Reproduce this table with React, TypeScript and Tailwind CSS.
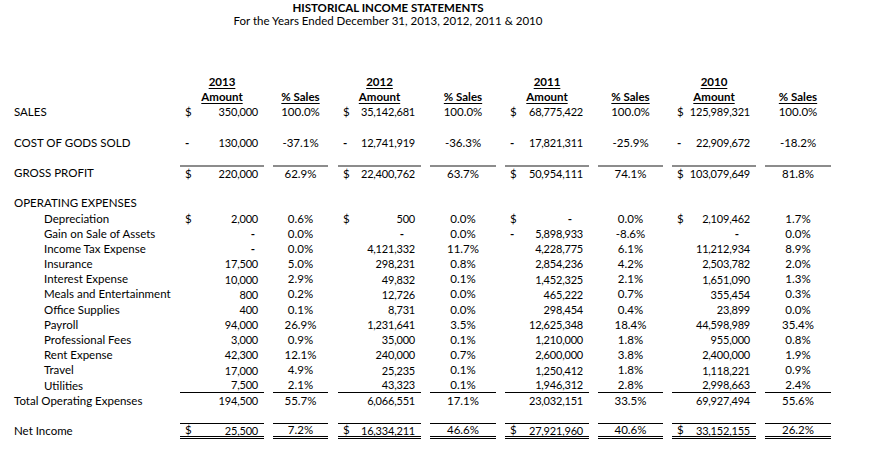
import React from 'react'

type Cell = { s?: string; a: string; p: string }
type Line = 'none' | 'gray' | 'under' | 'net'

const cols =
  'grid grid-cols-[180px_84px_9px_55px_10px_83px_9px_66px_9px_84px_9px_65px_9px_84px_9px_66px] h-[15.2px] items-stretch'

function lineClass(line: Line) {
  if (line === 'gray') return 'border-t-2 border-[#8c8c8c]'
  if (line === 'under') return 'border-b border-black'
  if (line === 'net') return 'border-t border-b-[3px] border-double border-black'
  return ''
}

function Row({
  label,
  indent,
  cells,
  line = 'none',
}: {
  label?: string
  indent?: boolean
  cells?: Cell[]
  line?: Line
}) {
  const lc = lineClass(line)
  return (
    <div className={cols}>
      <div className={`flex items-center whitespace-nowrap ${indent ? 'pl-[44px]' : 'pl-[14px]'}`}>{label}</div>
      {cells
        ? cells.map((c, i) => (
            <React.Fragment key={i}>
              <div className={`flex items-center justify-between pl-[5px] pr-[6px] ${lc}`}>
                <span className={c.s === '-' ? 'font-bold' : ''}>{c.s ?? ''}</span>
                {c.a === '-' ? (
                  <span className={`font-bold ${i === 0 ? 'mr-[3px]' : 'mr-[11px]'}`}>-</span>
                ) : (
                  <span className="text-[11px] tracking-[-0.2px]">{c.a}</span>
                )}
              </div>
              <div />
              <div className={`flex items-center justify-center ${lc}`}>{c.p}</div>
              {i < 3 && <div />}
            </React.Fragment>
          ))
        : null}
    </div>
  )
}

const years = ['2013', '2012', '2011', '2010']

const opex: [string, Cell[]][] = [
  ['Depreciation', [{ s: '$', a: '2,000', p: '0.6%' }, { s: '$', a: '500', p: '0.0%' }, { s: '$', a: '-', p: '0.0%' }, { s: '$', a: '2,109,462', p: '1.7%' }]],
  ['Gain on Sale of Assets', [{ a: '-', p: '0.0%' }, { a: '-', p: '0.0%' }, { s: '-', a: '5,898,933', p: '-8.6%' }, { a: '-', p: '0.0%' }]],
  ['Income Tax Expense', [{ a: '-', p: '0.0%' }, { a: '4,121,332', p: '11.7%' }, { a: '4,228,775', p: '6.1%' }, { a: '11,212,934', p: '8.9%' }]],
  ['Insurance', [{ a: '17,500', p: '5.0%' }, { a: '298,231', p: '0.8%' }, { a: '2,854,236', p: '4.2%' }, { a: '2,503,782', p: '2.0%' }]],
  ['Interest Expense', [{ a: '10,000', p: '2.9%' }, { a: '49,832', p: '0.1%' }, { a: '1,452,325', p: '2.1%' }, { a: '1,651,090', p: '1.3%' }]],
  ['Meals and Entertainment', [{ a: '800', p: '0.2%' }, { a: '12,726', p: '0.0%' }, { a: '465,222', p: '0.7%' }, { a: '355,454', p: '0.3%' }]],
  ['Office Supplies', [{ a: '400', p: '0.1%' }, { a: '8,731', p: '0.0%' }, { a: '298,454', p: '0.4%' }, { a: '23,899', p: '0.0%' }]],
  ['Payroll', [{ a: '94,000', p: '26.9%' }, { a: '1,231,641', p: '3.5%' }, { a: '12,625,348', p: '18.4%' }, { a: '44,598,989', p: '35.4%' }]],
  ['Professional Fees', [{ a: '3,000', p: '0.9%' }, { a: '35,000', p: '0.1%' }, { a: '1,210,000', p: '1.8%' }, { a: '955,000', p: '0.8%' }]],
  ['Rent Expense', [{ a: '42,300', p: '12.1%' }, { a: '240,000', p: '0.7%' }, { a: '2,600,000', p: '3.8%' }, { a: '2,400,000', p: '1.9%' }]],
  ['Travel', [{ a: '17,000', p: '4.9%' }, { a: '25,235', p: '0.1%' }, { a: '1,250,412', p: '1.8%' }, { a: '1,118,221', p: '0.9%' }]],
]

export default function App() {
  return (
    <div className="w-[881px] h-[466px] bg-white text-black text-[11.5px] leading-none font-['Lato',sans-serif] overflow-hidden">
      <div className="w-[776px] pt-[1px] text-center leading-[13px]">
        <div className="font-bold">HISTORICAL INCOME STATEMENTS</div>
        <div>For the Years Ended December 31, 2013, 2012, 2011 &amp; 2010</div>
      </div>

      <div className="mt-[47px]">
        {/* column headings */}
        <div className={cols}>
          <div />
          {years.map((y, i) => (
            <React.Fragment key={y}>
              <div className="flex items-center justify-center font-bold underline underline-offset-[2px]">{y}</div>
              <div />
              <div />
              {i < 3 && <div />}
            </React.Fragment>
          ))}
        </div>
        <div className={cols}>
          <div />
          {years.map((y, i) => (
            <React.Fragment key={y}>
              <div className="flex items-center justify-center font-bold underline underline-offset-[2px]">Amount</div>
              <div />
              <div className="flex items-center justify-center font-bold underline underline-offset-[2px]">% Sales</div>
              {i < 3 && <div />}
            </React.Fragment>
          ))}
        </div>

        <Row
          label="SALES"
          cells={[
            { s: '$', a: '350,000', p: '100.0%' },
            { s: '$', a: '35,142,681', p: '100.0%' },
            { s: '$', a: '68,775,422', p: '100.0%' },
            { s: '$', a: '125,989,321', p: '100.0%' },
          ]}
        />
        <Row />
        <Row
          label="COST OF GODS SOLD"
          cells={[
            { s: '-', a: '130,000', p: '-37.1%' },
            { s: '-', a: '12,741,919', p: '-36.3%' },
            { s: '-', a: '17,821,311', p: '-25.9%' },
            { s: '-', a: '22,909,672', p: '-18.2%' },
          ]}
        />
        <Row />
        <Row
          label="GROSS PROFIT"
          line="gray"
          cells={[
            { s: '$', a: '220,000', p: '62.9%' },
            { s: '$', a: '22,400,762', p: '63.7%' },
            { s: '$', a: '50,954,111', p: '74.1%' },
            { s: '$', a: '103,079,649', p: '81.8%' },
          ]}
        />
        <Row />
        <Row label="OPERATING EXPENSES" />
        {opex.map(([label, cells]) => (
          <Row key={label} label={label} indent cells={cells} />
        ))}
        <Row
          label="Utilities"
          indent
          line="under"
          cells={[
            { a: '7,500', p: '2.1%' },
            { a: '43,323', p: '0.1%' },
            { a: '1,946,312', p: '2.8%' },
            { a: '2,998,663', p: '2.4%' },
          ]}
        />
        <Row
          label="Total Operating Expenses"
          cells={[
            { a: '194,500', p: '55.7%' },
            { a: '6,066,551', p: '17.1%' },
            { a: '23,032,151', p: '33.5%' },
            { a: '69,927,494', p: '55.6%' },
          ]}
        />
        <Row />
        <Row
          label="Net Income"
          line="net"
          cells={[
            { s: '$', a: '25,500', p: '7.2%' },
            { s: '$', a: '16,334,211', p: '46.6%' },
            { s: '$', a: '27,921,960', p: '40.6%' },
            { s: '$', a: '33,152,155', p: '26.2%' },
          ]}
        />
      </div>
    </div>
  )
}
